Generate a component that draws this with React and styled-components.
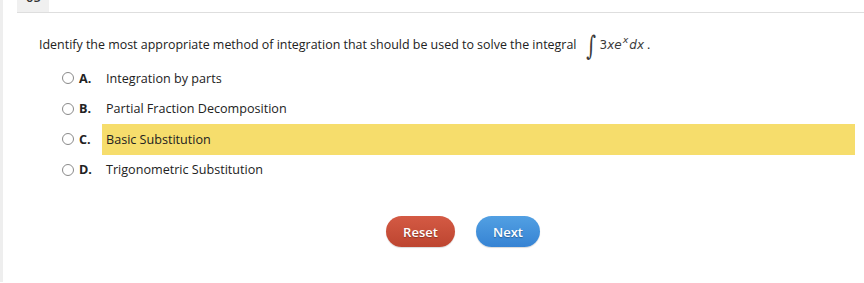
import React from "react";
import styled, { createGlobalStyle } from "styled-components";

const Global = createGlobalStyle`
  html, body { margin: 0; padding: 0; background: #fff; }
  body { font-family: "Open Sans", "Liberation Sans", sans-serif; color: #222; }
`;

const Page = styled.div`
  display: flex;
  height: 283px;
  overflow: hidden;
`;

const Strip = styled.div`
  width: 3px;
  height: 282px;
  background: #eeeeee;
  flex: none;
`;

const Main = styled.div`
  flex: 1;
  padding-left: 14px;
  display: flex;
  flex-direction: column;
`;

const Header = styled.div`
  height: 12px;
  border-bottom: 1px solid #dedede;
  display: flex;
`;

const Tab = styled.div`
  width: 32px;
  height: 12px;
  background: #f0f0f0;
  overflow: hidden;
  font-size: 13px;
  font-weight: 600;
  color: #333;
  padding-left: 9px;
  box-sizing: border-box;
  line-height: 13px;
  & > span { display: block; margin-top: -9px; }
`;

const Question = styled.div`
  margin: 21px 0 0 22px;
  height: 22px;
  font-size: 12.45px;
  line-height: 22px;
  color: #222;
  white-space: nowrap;
`;

const Math = styled.span`
  margin-left: 8px;
  font-family: "DejaVu Sans", "Liberation Sans", sans-serif;
  color: #3a3a3a;
  font-size: 12px;
`;

const IntSign = styled.span`
  display: inline-block;
  font-size: 27px;
  font-family: "DejaVu Serif", serif;
  transform: scaleX(0.7);
  vertical-align: -6px;
  margin-right: 1px;
  line-height: 16px;
`;

const It = styled.i`
  font-style: italic;
`;

const Sup = styled.span`
  font-size: 9.5px;
  font-style: italic;
  vertical-align: 6px;
  line-height: 10px;
  margin: 0 1px 0 1px;
`;

const Period = styled.span`
  margin-left: 3px;
`;

const Options = styled.div`
  display: flex;
  flex-direction: column;
  margin-top: 7px;
  padding-left: 45px;
  padding-right: 9px;
`;

const Option = styled.label`
  display: flex;
  align-items: center;
  height: 30.5px;
`;

const Radio = styled.span`
  width: 10px;
  height: 10px;
  border: 1px solid #8a8a8a;
  border-radius: 50%;
  background: #fff;
  flex: none;
`;

const Letter = styled.span`
  font-size: 12.6px;
  font-weight: 700;
  color: #222;
  margin-left: 5px;
  width: 23px;
`;

const Text = styled.span`
  flex: 1;
  font-size: 12.6px;
  color: #222;
  height: 31px;
  display: flex;
  align-items: center;
  padding-left: 4px;
  background: ${(p) => (p.$selected ? "#f6dd6c" : "transparent")};
`;

const Buttons = styled.div`
  display: flex;
  justify-content: flex-start;
  gap: 21px;
  padding-left: 369px;
  margin-top: 31px;
`;

const Button = styled.button`
  height: 31px;
  border: none;
  border-radius: 16px;
  color: #fff;
  font-family: "Open Sans", "Liberation Sans", sans-serif;
  font-size: 13px;
  font-weight: 600;
  text-shadow: 0 1px 1px rgba(0, 0, 0, 0.3);
  width: ${(p) => p.$w}px;
  background: ${(p) => p.$bg};
  box-shadow: 0 1px 1px rgba(0, 0, 0, 0.15);
  padding: 0;
`;

const options = [
  ["A.", "Integration by parts"],
  ["B.", "Partial Fraction Decomposition"],
  ["C.", "Basic Substitution", true],
  ["D.", "Trigonometric Substitution"],
];

export default function App() {
  return (
    <>
      <Global />
      <Page>
        <Strip />
        <Main>
          <Header>
            <Tab>
              <span>05</span>
            </Tab>
          </Header>
          <Question>
            Identify the most appropriate method of integration that should be used to solve the integral
            <Math>
              <IntSign>∫</IntSign>
              <span>3</span>
              <It>xe</It>
              <Sup>x</Sup>
              <It>dx</It>
            </Math>
            <Period>.</Period>
          </Question>
          <Options>
            {options.map(([l, t, sel]) => (
              <Option key={l}>
                <Radio />
                <Letter>{l}</Letter>
                <Text $selected={sel}>{t}</Text>
              </Option>
            ))}
          </Options>
          <Buttons>
            <Button $w={69} $bg="linear-gradient(#d45a44, #bd4530)">Reset</Button>
            <Button $w={64} $bg="linear-gradient(#52a0e3, #3683d3)">Next</Button>
          </Buttons>
        </Main>
      </Page>
    </>
  );
}
